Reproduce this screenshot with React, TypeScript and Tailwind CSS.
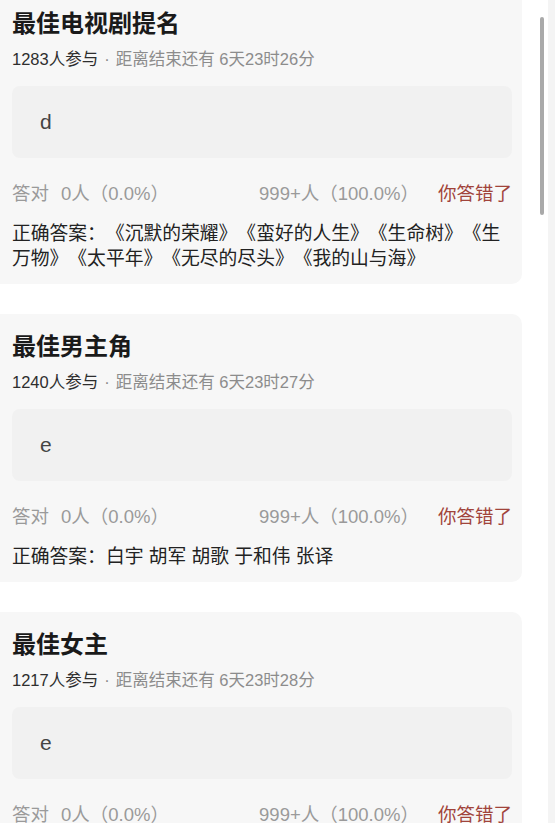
import React from "react";

type Question = {
  title: string;
  joined: number;
  remain: string;
  myAnswer: string;
  correct: string;
};

const questions: Question[] = [
  {
    title: "最佳电视剧提名",
    joined: 1283,
    remain: "6天23时26分",
    myAnswer: "d",
    correct:
      "《沉默的荣耀》《蛮好的人生》《生命树》《生万物》《太平年》《无尽的尽头》《我的山与海》",
  },
  {
    title: "最佳男主角",
    joined: 1240,
    remain: "6天23时27分",
    myAnswer: "e",
    correct: "白宇 胡军 胡歌 于和伟 张译",
  },
  {
    title: "最佳女主",
    joined: 1217,
    remain: "6天23时28分",
    myAnswer: "e",
    correct: "赵丽颖 孙俪 周冬雨 杨紫 白百何",
  },
];

const QuestionCard = ({ q }: { q: Question }) => {
  return (
    <div className="w-[522px] bg-[#f7f7f7] rounded-r-[10px] pl-3 pr-[10px] pt-[18px] pb-[13px]">
      <h2 className="text-[24px] leading-[30px] font-bold text-[#1a1a1a]">{q.title}</h2>
      <p className="mt-[9px] text-[16.5px] leading-[22px] text-[#8c8c8c]">
        <span className="text-[#2e2e2e]">{q.joined}人参与</span>
        <span className="mx-[6px]">·</span>
        距离结束还有 {q.remain}
      </p>
      <div className="mt-4 h-[72px] rounded-lg bg-[#f1f1f1] pl-7 flex items-center">
        <span className="text-[21px] text-[#444]">{q.myAnswer}</span>
      </div>
      <div className="mt-6 flex items-center text-[18.5px] leading-6 text-[#9a9a9a] [text-spacing-trim:space-all]">
        <span>答对</span>
        <span className="ml-3">0人（0.0%）</span>
        <div className="ml-auto flex items-center gap-[19px]">
          <span>999+人（100.0%）</span>
          <span className="text-[#a1443b]">你答错了</span>
        </div>
      </div>
      <p className="mt-[15px] text-[18.8px] leading-[25px] text-[#222] [text-spacing-trim:space-all]">
        正确答案：{q.correct}
      </p>
    </div>
  );
};

export default function App() {
  return (
    <div className="w-[555px] h-[823px] overflow-hidden bg-white flex font-['Liberation_Sans','Noto_Sans_CJK_SC',sans-serif]">
      <div className="relative w-[548px] h-full">
        <div className="-mt-[9px] flex flex-col gap-[30px]">
          {questions.map((q) => (
            <QuestionCard key={q.title} q={q} />
          ))}
        </div>
        <div className="absolute left-[540px] top-[17px] w-[4px] h-[198px] rounded-full bg-[#a9a9a9]" />
      </div>
      <div className="flex-1 h-full bg-[#f4f4f4]" />
    </div>
  );
}
